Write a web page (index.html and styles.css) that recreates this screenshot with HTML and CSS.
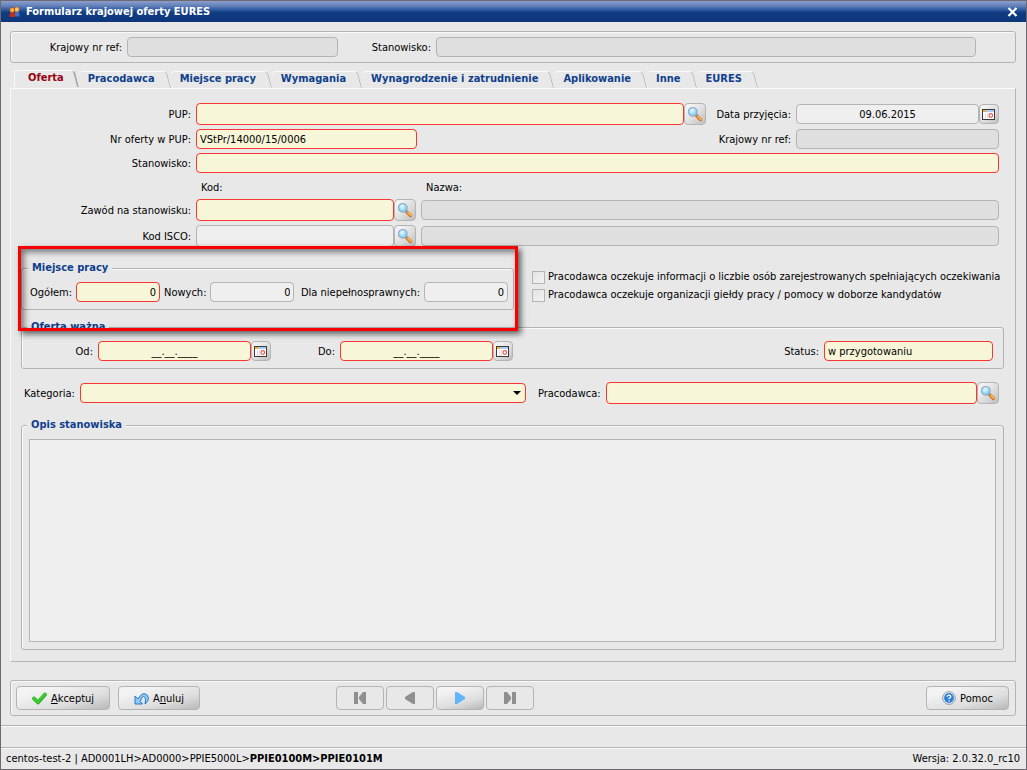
FILE: index.html
```html
<!DOCTYPE html>
<html lang="pl">
<head>
<meta charset="utf-8">
<title>Formularz krajowej oferty EURES</title>
<link rel="stylesheet" href="styles.css">
</head>
<body>
<svg class="defs" aria-hidden="true">
  <defs>
    <radialGradient id="lens" cx="40%" cy="35%" r="70%"><stop offset="0" stop-color="#e4fbff"/><stop offset="1" stop-color="#6ec3ee"/></radialGradient>
    <symbol id="search" viewBox="0 0 16 16">
      <path d="M9.500 9.500l4 4" stroke="#c9691b" stroke-width="3.200" stroke-linecap="round"/>
      <path d="M9.800 9.300l4 4" stroke="#fdb04e" stroke-width="2" stroke-linecap="round"/>
      <path d="M8.800 8.800l1.500 1.500" stroke="#8b9199" stroke-width="2"/>
      <circle cx="5.800" cy="5.800" r="4.300" fill="url(#lens)" stroke="#8fabc8" stroke-width="1.200"/>
    </symbol>
    <symbol id="calendar" viewBox="0 0 13 11">
      <rect x=".5" y=".5" width="12" height="10" fill="#fff" stroke="#3a3a3a"/>
      <path d="M1 1h3v2H1z" fill="#f6ae3c"/><path d="M4 1h8v2H4z" fill="#a9cdf0"/>
      <path d="M3.500 4v6M5.500 4v6" stroke="#dedede"/>
      <circle cx="8.800" cy="6.500" r="1.800" fill="#fff" stroke="#e8584e" stroke-width="1.200"/>
    </symbol>
  </defs>
</svg>
<div class="window">
  <header class="titlebar">
    <svg class="app-icon" viewBox="0 0 11 12" aria-hidden="true">
      <path d="M5.500 10.500V7.500Q5.500 5.500 8 5.500T10.500 7.500v3z" fill="#3c6fd0"/>
      <circle cx="7.800" cy="3.500" r="2.400" fill="#ffc36b" stroke="#c86b18" stroke-width=".7"/>
      <path d="M.500 11V8Q.500 6 3.200 6T6 8v3z" fill="#c72b12"/>
      <circle cx="3.200" cy="4" r="2.500" fill="#ffb44f" stroke="#a84510" stroke-width=".8"/>
    </svg>
    <h1 class="title">Formularz krajowej oferty EURES</h1>
    <button class="close" type="button" aria-label="Zamknij">
      <svg viewBox="0 0 11 10" width="11" height="10"><path d="M1.500 1l8 8M9.500 1l-8 8" stroke="#fff" stroke-width="2.200"/></svg>
    </button>
  </header>

  <main class="content">
    <section class="summary">
      <label class="summary-label" for="s-ref">Krajowy nr ref:</label>
      <input class="field off summary-ref" id="s-ref" readonly>
      <label class="summary-label second" for="s-pos">Stanowisko:</label>
      <input class="field off grow" id="s-pos" readonly>
    </section>

    <nav class="tabs" role="tablist">
      <button class="tab active" role="tab" aria-selected="true">Oferta</button>
      <button class="tab" role="tab">Pracodawca</button>
      <button class="tab" role="tab">Miejsce pracy</button>
      <button class="tab" role="tab">Wymagania</button>
      <button class="tab" role="tab">Wynagrodzenie i zatrudnienie</button>
      <button class="tab" role="tab">Aplikowanie</button>
      <button class="tab" role="tab">Inne</button>
      <button class="tab" role="tab">EURES</button>
    </nav>

    <form class="panel">
      <div class="row">
        <label class="main-label" for="pup">PUP:</label>
        <div class="combo grow"><input class="field req tall grow" id="pup"><button class="pick" type="button" aria-label="Szukaj PUP"><svg><use href="#search"/></svg></button></div>
        <label class="side-label" for="date">Data przyjęcia:</label>
        <div class="combo side"><input class="field center grow" id="date" value="09.06.2015"><button class="pick cal" type="button" aria-label="Kalendarz"><svg><use href="#calendar"/></svg></button></div>
      </div>
      <div class="row">
        <label class="main-label" for="nr">Nr oferty w PUP:</label>
        <input class="field req number" id="nr" value="VStPr/14000/15/0006">
        <label class="side-label push" for="ref">Krajowy nr ref:</label>
        <input class="field off side" id="ref" readonly>
      </div>
      <div class="row">
        <label class="main-label" for="pos">Stanowisko:</label>
        <input class="field req grow" id="pos">
      </div>
      <div class="row heads">
        <span class="main-label"></span>
        <span class="head code">Kod:</span>
        <span class="head">Nazwa:</span>
      </div>
      <div class="row">
        <label class="main-label" for="job">Zawód na stanowisku:</label>
        <div class="combo code"><input class="field req tall grow" id="job"><button class="pick" type="button" aria-label="Szukaj zawodu"><svg><use href="#search"/></svg></button></div>
        <input class="field off grow" aria-label="Nazwa zawodu" readonly>
      </div>
      <div class="row">
        <label class="main-label" for="isco">Kod ISCO:</label>
        <div class="combo code"><input class="field tall grow" id="isco"><button class="pick" type="button" aria-label="Szukaj kodu ISCO"><svg><use href="#search"/></svg></button></div>
        <input class="field off grow" aria-label="Nazwa ISCO" readonly>
      </div>

      <div class="split">
        <div class="places">
          <fieldset class="group">
            <legend>Miejsce pracy</legend>
            <div class="line">
              <label for="all">Ogółem:</label><input class="field req count" id="all" value="0">
              <label for="new">Nowych:</label><input class="field count" id="new" value="0">
              <label class="push" for="dis">Dla niepełnosprawnych:</label><input class="field count" id="dis" value="0">
            </div>
          </fieldset>
          <div class="highlight"></div>
        </div>
        <div class="checks">
          <label class="check"><input type="checkbox">Pracodawca oczekuje informacji o liczbie osób zarejestrowanych spełniających oczekiwania</label>
          <label class="check"><input type="checkbox">Pracodawca oczekuje organizacji giełdy pracy / pomocy w doborze kandydatów</label>
        </div>
      </div>

      <fieldset class="group validity">
        <legend>Oferta ważna</legend>
        <div class="line">
          <label class="from" for="from">Od:</label>
          <div class="combo date"><input class="field req center grow" id="from" value="__.__.____"><button class="pick cal" type="button" aria-label="Kalendarz od"><svg><use href="#calendar"/></svg></button></div>
          <label class="to" for="to">Do:</label>
          <div class="combo date"><input class="field req center grow" id="to" value="__.__.____"><button class="pick cal" type="button" aria-label="Kalendarz do"><svg><use href="#calendar"/></svg></button></div>
          <label class="push" for="status">Status:</label>
          <input class="field req status" id="status" value="w przygotowaniu">
        </div>
      </fieldset>

      <div class="row category">
        <label for="cat">Kategoria:</label>
        <div class="dropdown"><select class="field req" id="cat"><option></option></select></div>
        <label class="employer" for="emp">Pracodawca:</label>
        <div class="combo grow"><input class="field req tall grow" id="emp"><button class="pick" type="button" aria-label="Szukaj pracodawcy"><svg><use href="#search"/></svg></button></div>
      </div>

      <fieldset class="group description">
        <legend>Opis stanowiska</legend>
        <textarea class="notes" aria-label="Opis stanowiska"></textarea>
      </fieldset>
    </form>

    <section class="actions">
      <button class="btn accept" type="button">
        <svg width="15" height="13" viewBox="0 0 15 13"><path d="M2 6.500l4 4L13 2.500" fill="none" stroke="#1f9d1c" stroke-width="3.600" stroke-linejoin="round" stroke-linecap="round"/><path d="M2 6.200l4 4L13 2.200" fill="none" stroke="#38cf2c" stroke-width="2.800" stroke-linejoin="round" stroke-linecap="round"/></svg>
        <span><u>A</u>kceptuj</span>
      </button>
      <button class="btn cancel" type="button">
        <svg width="15" height="13" viewBox="0 0 15 13"><path d="M1 4v8h7.500L6.300 9.500Q7.500 4.500 9.500 4.500q3 .5 1.500 7.500Q16 8 13.500 3.500 9-1.500 4 7z" fill="#8fcaf8" stroke="#2878c4" stroke-linejoin="round"/></svg>
        <span>A<u>n</u>uluj</span>
      </button>
      <div class="pager">
        <button class="btn nav" type="button" disabled aria-label="Pierwszy"><svg width="12" height="12"><path d="M0 0h4v12H0zM12 0v12L9 12 5 7V5l4-5z"/></svg></button>
        <button class="btn nav" type="button" disabled aria-label="Poprzedni"><svg width="12" height="12"><path d="M11 0v12H9L1 7V5l8-5z"/></svg></button>
        <button class="btn nav next" type="button" aria-label="Następny"><svg width="12" height="12"><path d="M1 0v12h2l8-5V5L3 0z"/></svg></button>
        <button class="btn nav" type="button" disabled aria-label="Ostatni"><svg width="12" height="12"><path d="M8 0h4v12H8zM0 0v12h3l4-5V5L3 0z"/></svg></button>
      </div>
      <button class="btn help" type="button">
        <svg width="14" height="14" viewBox="0 0 14 14"><circle cx="7" cy="7" r="6.300" fill="#f4f6f8" stroke="#8794a2"/><circle cx="7" cy="7" r="4.900" fill="#2d7fd3"/><path d="M5.200 5.700Q5.300 4.200 7 4.200t1.800 1.500Q8.800 6.700 7 7.300v.8M7 9.200v1.300" fill="none" stroke="#fff" stroke-width="1.300"/></svg>
        <span>Pomoc</span>
      </button>
    </section>
  </main>

  <div class="message"></div>
  <footer class="statusbar">
    <span>centos-test-2 | AD0001LH&gt;AD0000&gt;PPIE5000L&gt;<b>PPIE0100M&gt;PPIE0101M</b></span>
    <span>Wersja: 2.0.32.0_rc10</span>
  </footer>
</div>
</body>
</html>
```
FILE: styles.css
```css
* { box-sizing: border-box; }

body {
  margin: 0;
  background: #e8e8e8;
  color: #000;
  font: 11px/14px "DejaVu Sans Condensed", "DejaVu Sans", sans-serif;
}

button, input, select, textarea { font: inherit; color: inherit; }
label { white-space: nowrap; }
.row label, .line label, .summary label { padding-top: 1px; }
.defs { position: absolute; width: 0; height: 0; }

.window {
  display: flex;
  flex-direction: column;
  min-height: 100vh;
  border: 1px solid #6f6870;
}

.titlebar {
  display: flex;
  align-items: center;
  height: 21px;
  padding: 0 8px;
  background: linear-gradient(#8b9fcb, #5f7db8 25%, #25529a 45%, #103c82 55%, #0d367a);
}
.app-icon { width: 11px; height: 12px; margin-right: 6px; }
.title { flex: 1; margin: 0; color: #fff; font-size: 11px; line-height: 14px; }
.close { display: flex; padding: 0; border: 0; background: none; }

.content {
  flex: 1;
  display: flex;
  flex-direction: column;
  padding: 9px 10px 9px 9px;
}

.summary, .actions {
  display: flex;
  align-items: center;
  border: 1px solid #b4b4b4;
  border-radius: 3px;
  box-shadow: inset 1px 1px #fafafa;
}
.summary { height: 32px; gap: 5px; padding: 0 39px 0 5px; }
.summary-label { width: 106px; text-align: right; }
.summary-label.second { width: 88px; }
.summary-ref { width: 211px; }

.field {
  min-width: 0;
  height: 20px;
  padding: 0 3px;
  border: 1px solid #b4b4b4;
  border-radius: 4px;
  background: #efefef;
  outline: 0;
}
.field.off { background: #dfdfdf; }
.field.req { border-color: #fb3530; background: #f8f6d8; }
.field.tall { height: 22px; }
.field.center { text-align: center; }
.grow { flex: 1; }
.push { margin-left: auto; }

.tabs { display: flex; align-items: flex-end; height: 25px; padding-left: 4px; }
.tab {
  position: relative;
  height: 17px;
  padding: 0 16px 1px 9px;
  border: 0;
  background: none;
  color: #0f3f8c;
  font-weight: bold;
  line-height: 14px;
}
.tab::before {
  content: "";
  position: absolute;
  inset: 0 6px 1px 0;
  border-top: 1px solid #fafafa;
  border-top-left-radius: 4px;
}
.tab::after {
  content: "";
  position: absolute;
  top: 1px;
  right: 2px;
  width: 4px;
  height: 16px;
  border-right: 1px solid #b4b4b4;
  border-top-right-radius: 3px;
  transform: skewX(14deg);
}
.tab.active { height: 18px; padding: 0 15px 3px 14px; color: #96040f; }
.tab.active::before { border-left: 1px solid #fafafa; }
.tab.active::after { border-right: 2px solid #a8a8a8; }

.panel {
  flex: 1;
  display: flex;
  flex-direction: column;
  gap: 4px;
  padding: 14px 11px 11px 10px;
  border: 1px solid #b4b4b4;
  border-top-color: #fafafa;
  border-left-color: #fafafa;
}
.row { display: flex; align-items: center; gap: 5px; padding-right: 5px; }
.main-label { width: 170px; text-align: right; }
.side-label { width: 80px; text-align: right; }
.side { width: 203px; }
.number { width: 221px; }
.code { width: 220px; }
.heads { margin-top: 4px; }
.head { padding-left: 5px; }

.combo { display: flex; align-items: center; }
.pick {
  display: flex;
  align-items: center;
  justify-content: center;
  width: 22px;
  height: 22px;
  padding: 0;
  border: 1px solid #b4b4b4;
  border-radius: 4px;
  background: linear-gradient(135deg, #f1f1f1 20%, #dedede 55%, #bdbdbd);
}
.pick svg { width: 16px; height: 16px; }
.pick.cal { width: 20px; height: 20px; padding-right: 1px; }
.pick.cal svg { width: 13px; height: 11px; }

.split { display: flex; align-items: flex-start; margin-top: 10px; }
.places { position: relative; flex: 0 0 493px; }
.highlight {
  position: absolute;
  inset: -15px -4px -21px -3px;
  border: 3px solid #f80000;
  box-shadow: 3px 3px 6px rgba(0, 0, 0, .6), inset 3px 3px 6px rgba(0, 0, 0, .5);
  pointer-events: none;
}

.group {
  min-width: 0;
  margin: 0;
  padding: 7px;
  border: 1px solid #b4b4b4;
  border-radius: 3px;
  box-shadow: inset 1px 1px #fafafa;
}
.group legend {
  padding: 0 4px;
  margin-left: -2px;
  background: #e8e8e8;
  color: #0f3f8c;
  font-weight: bold;
}
.line { display: flex; align-items: center; gap: 5px; }
.places .group { padding: 7px 5px 7px 8px; }
.places .line { gap: 4px; }
.count { width: 84px; text-align: right; }

.checks { padding: 7px 0 0 18px; }
.check { display: flex; align-items: center; gap: 3px; height: 18px; }
.check input {
  appearance: none;
  width: 13px;
  height: 13px;
  margin: 0;
  border: 1px solid #b4b4b4;
  background: linear-gradient(135deg, #e2e2e2, #f4f4f4);
}

.validity { margin-top: 6px; }
.validity .line { padding-right: 3px; }
.from { width: 64px; text-align: right; }
.to { width: 59px; text-align: right; }
.date { width: 173px; }
.status { width: 169px; }

.category { margin-top: 9px; padding-left: 3px; }
.dropdown { position: relative; display: flex; flex: 0 0 446px; }
.dropdown select { flex: 1; appearance: none; }
.dropdown::after {
  content: "";
  position: absolute;
  top: 8px;
  right: 5px;
  border: 4px solid transparent;
  border-top-color: #000;
  border-bottom: 0;
  pointer-events: none;
}
.employer { margin-left: 7px; }

.description { flex: 1; margin-top: 10px; }
.notes {
  display: block;
  width: 100%;
  height: 203px;
  border: 1px solid #b4b4b4;
  background: #efefef;
  resize: none;
  outline: 0;
}

.actions { height: 36px; margin-top: 18px; padding: 0 6px 0 5px; gap: 8px; }
.btn {
  display: flex;
  align-items: center;
  justify-content: center;
  gap: 4px;
  height: 24px;
  padding: 0;
  border: 1px solid #b4b4b4;
  border-radius: 4px;
  background: linear-gradient(165deg, #f3f3f3 20%, #dedede 65%, #b8b8b8);
}
.btn span { padding-top: 1px; }
.accept { width: 94px; }
.cancel { width: 82px; }
.help { width: 83px; margin-left: auto; }
.pager { display: flex; gap: 2px; margin-left: 128px; }
.nav { width: 48px; fill: #8f8f8f; }
.nav:disabled { background: #e8e8e8; }
.nav.next { fill: #62b4fb; }

.message { height: 22px; border-top: 1px solid #b4b4b4; box-shadow: inset 0 1px #fafafa; }
.statusbar {
  display: flex;
  justify-content: space-between;
  padding: 4px 6px 3px 5px;
  border-top: 1px solid #b4b4b4;
  box-shadow: inset 0 1px #fafafa;
}
```
